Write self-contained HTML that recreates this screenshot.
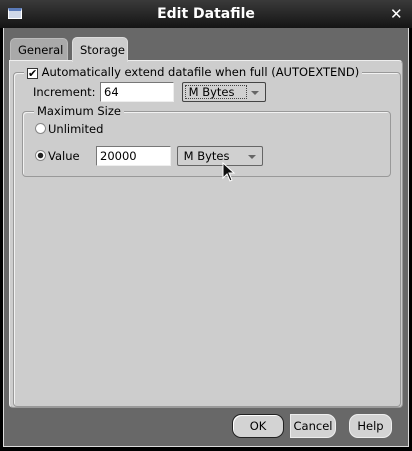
<!DOCTYPE html>
<html><head><style>
*{margin:0;padding:0;box-sizing:border-box}
body{width:412px;height:451px;overflow:hidden;background:#000;font-family:"DejaVu Sans","Liberation Sans",sans-serif;font-size:11.5px;color:#000;position:relative}
.abs{position:absolute}
#title{left:0;top:0;width:412px;height:28px;background:linear-gradient(#3a3a3a,#141414);color:#fff;font-weight:bold;font-size:14px;text-align:center;line-height:28px}
#win{left:3px;top:28px;width:406px;height:419px;background:#686868;border-left:1px solid #dcdcdc;border-right:1px solid #dcdcdc;border-bottom:1px solid #dcdcdc}
#panel{left:9px;top:60px;width:394px;height:348px;background:#cdcdcd;border:1px solid #eee;border-radius:0 4px 4px 4px;border-right-color:#999;border-bottom-color:#999}
.tab{top:38px;height:23px;border:1px solid #ddd;border-bottom:none;border-radius:5px 5px 0 0;line-height:22px;padding-left:7px}
.grp{border:1px solid #999;border-radius:4px;box-shadow:1px 1px 0 #f2f2f2 inset}
.lbl{background:#cdcdcd;padding:0 3px;line-height:14px}
.tf{background:#fff;border:1px solid #777;border-right-color:#eee;border-bottom-color:#eee;height:20px;line-height:18px;padding-left:3px;font-size:11.5px}
.cb{background:#d0d0d0;border:1px solid #444;border-radius:2px;height:20px;line-height:18px;padding-left:2px}
.cb i{position:absolute;left:2px;top:2px;right:18px;bottom:2px;border:1px dotted #444}
.cb b{position:absolute;right:6px;top:8px;width:0;height:0;border-left:4px solid transparent;border-right:4px solid transparent;border-top:4px solid #666}
.btn{top:414px;height:24px;border-radius:9px;background:#d3d3d3;border:1px solid #eee;text-align:center;line-height:22px}
.rad{width:11px;height:11px;border-radius:50%;background:#fff;border:1px solid #888}
</style></head><body>
<div id="title" class="abs">Edit Datafile</div>
<div class="abs" style="left:8px;top:8px;width:14px;height:11px;background:#cfd8e8;border:1px solid #fff;border-top:3px solid #5a7ab8"></div>
<div class="abs" style="left:390px;top:5px;color:#fff;font-size:15px;font-weight:bold">✕</div>
<div id="win" class="abs"></div>
<div class="tab abs" style="left:10px;width:58px;background:#a9a9a9;border-color:#bbb">General</div>
<div id="panel" class="abs"></div>
<div class="tab abs" style="left:72px;width:56px;background:#cdcdcd;top:37px;height:25px;line-height:24px">Storage</div>

<div class="grp abs" style="left:13px;top:72px;width:388px;height:335px;border-radius:4px"></div>
<div class="abs lbl" style="left:24px;top:65px;">
<span style="display:inline-block;width:11px;height:11px;border:1px solid #333;background:#fff;vertical-align:-1px;font-size:11px;line-height:9px;font-weight:bold">✔</span> Automatically extend datafile when full (AUTOEXTEND)</div>
<div class="abs" style="left:33px;top:85px">Increment:</div>
<div class="tf abs" style="left:100px;top:82px;width:74px">64</div>
<div class="cb abs" style="left:182px;top:82px;width:84px"><i></i>&nbsp;M Bytes<b></b></div>

<div class="grp abs" style="left:22px;top:111px;width:369px;height:66px"></div>
<div class="abs lbl" style="left:34px;top:104px">Maximum Size</div>
<div class="rad abs" style="left:35px;top:123px"></div>
<div class="abs" style="left:48px;top:122px">Unlimited</div>
<div class="rad abs" style="left:35px;top:150px;background:radial-gradient(#222 0 2.5px,#fff 3px)"></div>
<div class="abs" style="left:48px;top:149px">Value</div>
<div class="tf abs" style="left:96px;top:146px;width:75px">20000</div>
<div class="cb abs" style="left:177px;top:146px;width:86px;border-color:#666">&nbsp;M Bytes<b></b></div>
<svg class="abs" style="left:222px;top:162px" width="14" height="22"><path d="M1 1 L1 16 L5 12 L8 19 L10 18 L7 11 L12 11 Z" fill="#111" stroke="#fff" stroke-width="1"/></svg>

<div class="btn abs" style="left:232px;width:52px;border:1px solid #222;box-shadow:inset 1px 1px 0 #fff">OK</div>
<div class="btn abs" style="left:290px;width:46px;border-radius:0 9px 9px 0">Cancel</div>
<div class="btn abs" style="left:349px;width:43px">Help</div>
</body></html>
